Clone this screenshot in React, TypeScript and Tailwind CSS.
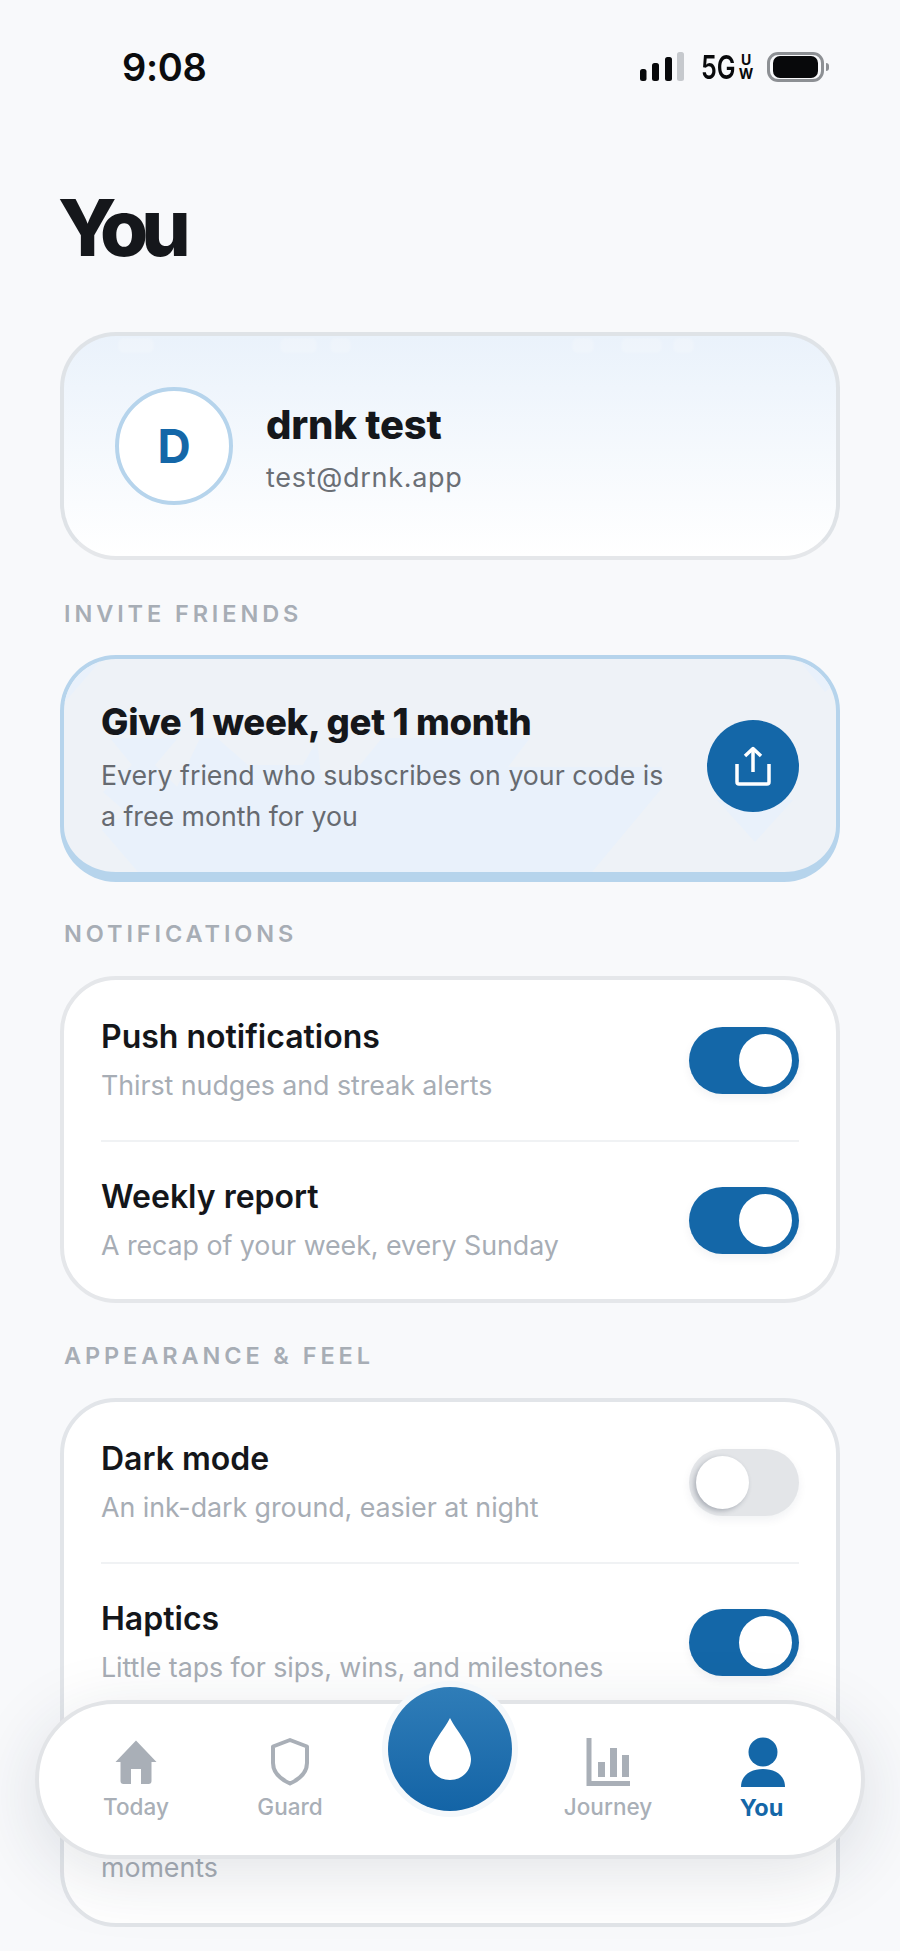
const sans = "[font-family:Inter,'Noto_Sans',sans-serif]";

const Toggle = ({ on }: { on: boolean }) => (
    <div
        className={`flex h-[67px] w-[110px] shrink-0 items-center rounded-full px-[7px] shadow-[0_4px_10px_rgba(20,40,70,0.06)] ${
            on ? 'justify-end bg-[#1467a8]' : 'justify-start bg-[#e3e5e8]'
        }`}
    >
        <div className={`h-[53px] w-[53px] rounded-full bg-white ${on ? '' : 'shadow-[-2px_2px_5px_rgba(40,50,70,0.3)]'}`} />
    </div>
);

const Row = ({ title, sub, on, height }: { title: string; sub: string; on: boolean; height: string }) => (
    <div className={`flex items-center justify-between ${height}`}>
        <div>
            <div className="text-[32px] leading-[42px] font-semibold text-[#14161a]">{title}</div>
            <div className="mt-[7px] text-[26.8px] leading-[40px] tracking-[-0.05px] text-[#a7adb5]">{sub}</div>
        </div>
        <Toggle on={on} />
    </div>
);

const Label = ({ children, className }: { children: string; className: string }) => (
    <div className={`ml-[4px] text-[23.5px] leading-[30px] font-semibold tracking-[3.9px] text-[#a7adb5] ${className}`}>{children}</div>
);

const Divider = () => <div className="h-[2px] bg-[#f0f2f4]" />;

const StatusBar = () => (
    <div className="flex h-[30px] items-center justify-between pr-[71px] pl-[122px]">
        <span className="text-[38px] leading-[30px] font-semibold tracking-[-0.3px] text-[#0b0c0e]">9:08</span>
        <div className="flex items-center">
            <svg width="44" height="30" viewBox="0 0 44 30" className="mr-[17px]">
                <rect x="0" y="17" width="6.5" height="12" rx="2.5" fill="#08090b" />
                <rect x="12" y="11" width="7" height="18" rx="2.5" fill="#08090b" />
                <rect x="25" y="5" width="7" height="24" rx="2.5" fill="#08090b" />
                <rect x="37" y="0" width="7" height="29" rx="2.5" fill="#c6c9cd" />
            </svg>
            <span className="w-[33px] origin-left scale-x-[0.76] text-[33px] leading-[30px] font-semibold text-[#08090b]">5G</span>
            <span className="ml-[6px] flex w-[12px] flex-col items-center text-[14px] leading-[14px] font-bold text-[#08090b]">
                <span>U</span>
                <span>W</span>
            </span>
            <div className="ml-[15px] flex h-[30px] w-[57px] items-center justify-center rounded-[11px] border-[3px] border-[#8d9094]">
                <div className="h-[22px] w-[45px] rounded-[7px] bg-[#08090b]" />
            </div>
            <div className="ml-[2px] h-[8px] w-[3px] rounded-r-full bg-[#8d9094]" />
        </div>
    </div>
);

const Nav = () => (
    <div className="absolute top-[1700px] left-[35px] h-[159px] w-[830px] rounded-full border-4 border-[#e2e4e7] bg-white shadow-[0_16px_70px_rgba(30,45,70,0.13)]">
        <div className="grid grid-cols-[154px_154px_166px_150px_160px] pt-[33px] pl-[20px] text-[22.5px] leading-[30px] font-medium text-[#a9afb7]">
            <div className="flex flex-col items-center">
                <svg width="42" height="50" viewBox="0 0 42 50">
                    <path
                        d="M21 3.5 L41.5 25 L36.5 25 L36.5 44 Q36.5 47 33.5 47 L26 47 L26 32 L16 32 L16 47 L8.5 47 Q5.5 47 5.5 44 L5.5 25 L0.5 25 Z"
                        fill="#a9afb7"
                    />
                </svg>
                <span className="mt-[5px]">Today</span>
            </div>
            <div className="flex flex-col items-center">
                <svg width="38" height="50" viewBox="0 0 38 50">
                    <path
                        d="M19 3 L36 9.5 L36 26 C36 35 29 42 19 46.5 C9 42 2 35 2 26 L2 9.5 Z"
                        fill="none"
                        stroke="#a9afb7"
                        strokeWidth="4"
                        strokeLinejoin="round"
                    />
                </svg>
                <span className="mt-[5px]">Guard</span>
            </div>
            <div className="relative">
                <div className="absolute top-[-56px] left-[15px] flex h-[136px] w-[136px] items-center justify-center rounded-full bg-[#f5f8fb]">
                    <div className="flex h-[124px] w-[124px] items-center justify-center rounded-full bg-gradient-to-b from-[#2f7db8] to-[#1364a6]">
                        <svg width="42" height="62" viewBox="0 0 42 62" className="mt-[-1px]">
                            <path d="M21 0 C27 12 42 28 42 41 C42 53 33 62 21 62 C9 62 0 53 0 41 C0 28 15 12 21 0 Z" fill="#fff" />
                        </svg>
                    </div>
                </div>
            </div>
            <div className="flex flex-col items-center">
                <svg width="44" height="50" viewBox="0 0 44 50">
                    <path d="M3 1 L3 46.5 L44 46.5" fill="none" stroke="#a9afb7" strokeWidth="5" />
                    <rect x="12" y="25" width="7" height="15" fill="#a9afb7" />
                    <rect x="24" y="11" width="7" height="29" fill="#a9afb7" />
                    <rect x="36" y="18" width="7" height="22" fill="#a9afb7" />
                </svg>
                <span className="mt-[5px]">Journey</span>
            </div>
            <div className="flex flex-col items-center text-[#1467a8]">
                <svg width="44" height="50" viewBox="0 0 44 50">
                    <circle cx="22" cy="15" r="14.5" fill="#1467a8" />
                    <path d="M0 50 C0 38 10 32 22 32 C34 32 44 38 44 50 Z" fill="#1467a8" />
                </svg>
                <span className="mt-[6px] mr-[3px] text-[23.5px] font-bold">You</span>
            </div>
        </div>
    </div>
);

const App = () => {
    return (
        <div className={`relative h-[1951px] w-[900px] overflow-hidden bg-[#f8f9fb] pt-[52px] ${sans}`}>
            <StatusBar />

            <div className="px-[60px]">
                <h1 className="mt-[107px] ml-[-2px] h-[78px] text-[78px] leading-[78px] font-extrabold tracking-[-7px] text-[#15171b]">You</h1>

                {/* Profile */}
                <div className="relative mt-[65px] flex h-[228px] items-center overflow-hidden rounded-[56px] border-4 border-[#dfe3e7] border-b-[#e5e7ea] bg-gradient-to-b from-[#eaf2fb] to-white pl-[51px]">
                    {/* faint ghost smudges along the top edge */}
                    <div className="absolute top-[2px] left-[54px] h-[15px] w-[36px] rounded-[6px] bg-white/20 blur-[1px]" />
                    <div className="absolute top-[2px] left-[216px] h-[15px] w-[37px] rounded-[6px] bg-white/20 blur-[1px]" />
                    <div className="absolute top-[2px] left-[266px] h-[15px] w-[21px] rounded-[6px] bg-white/20 blur-[1px]" />
                    <div className="absolute top-[2px] left-[508px] h-[15px] w-[22px] rounded-[6px] bg-white/20 blur-[1px]" />
                    <div className="absolute top-[2px] left-[557px] h-[15px] w-[41px] rounded-[6px] bg-white/20 blur-[1px]" />
                    <div className="absolute top-[2px] left-[609px] h-[15px] w-[21px] rounded-[6px] bg-white/20 blur-[1px]" />
                    <div className="relative flex h-[118px] w-[118px] items-center justify-center rounded-full border-4 border-[#b6d4ec] bg-white text-[46px] font-bold text-[#1467a8]">
                        D
                    </div>
                    <div className="relative mt-[5px] ml-[33px]">
                        <div className="text-[40px] leading-[46px] font-extrabold tracking-[-0.2px] text-[#15171b]">drnk test</div>
                        <div className="mt-[12px] text-[27px] leading-[36px] tracking-[0.7px] text-[#6b6f75]">test@drnk.app</div>
                    </div>
                </div>

                <Label className="mt-[39px]">INVITE FRIENDS</Label>

                {/* Invite */}
                <div className="relative mt-[26px] flex h-[227px] items-center justify-between overflow-hidden rounded-[56px] border-4 border-b-[10px] border-[#b6d4ec] bg-[#eef2f7] px-[37px]">
                    <svg width="772" height="213" viewBox="0 0 772 213" className="absolute top-0 left-0">
                        <path d="M0 44 L0 0 L38 0 Z M734 0 L772 0 L772 24 L761 33 Z M653 141 L729 141 L691 183 Z" fill="#e9f1fb" />
                        <path
                            d="M46 79 L114 79 L91 106 L113 128 L136 79 L153 79 L184 106 L239 106 L253 81 L258 126 L296 106 L318 79 L466 79 L444 108 L598 108 L598 129 L528 213 L74 213 L38 171 L63 154 L39 133 L68 106 Z"
                            fill="#e9f1fb"
                        />
                    </svg>
                    <div className="relative pt-[5px]">
                        <div className="text-[36.5px] leading-[44px] font-extrabold tracking-[-0.3px] text-[#15171b]">Give 1 week, get 1 month</div>
                        <div className="mt-[11px] text-[26.7px] leading-[41px] text-[#666a70]">
                            Every friend who subscribes on your code is
                            <br />a free month for you
                        </div>
                    </div>
                    <div className="relative flex h-[92px] w-[92px] shrink-0 items-center justify-center rounded-full bg-[#1467a8]">
                        <svg width="36" height="40" viewBox="0 0 36 40" fill="none" stroke="#fff" strokeWidth="3.5" strokeLinejoin="round">
                            <path d="M18 26 L18 3" />
                            <path d="M10 10 L18 2.5 L26 10" />
                            <path d="M2 18 L2 36 Q2 38 4 38 L32 38 Q34 38 34 36 L34 18" />
                        </svg>
                    </div>
                </div>

                <Label className="mt-[37px]">NOTIFICATIONS</Label>

                <div className="mt-[27px] h-[327px] rounded-[56px] border-4 border-[#e5e7ea] bg-white px-[37px]">
                    <Row title="Push notifications" sub="Thirst nudges and streak alerts" on height="h-[160px]" />
                    <Divider />
                    <Row title="Weekly report" sub="A recap of your week, every Sunday" on height="h-[157px]" />
                </div>

                <Label className="mt-[38px]">APPEARANCE &amp; FEEL</Label>

                <div className="mt-[27px] h-[529px] rounded-[56px] border-4 border-[#e2e5e9] bg-white px-[37px]">
                    <Row title="Dark mode" sub="An ink-dark ground, easier at night" on={false} height="h-[160px]" />
                    <Divider />
                    <Row title="Haptics" sub="Little taps for sips, wins, and milestones" on height="h-[157px]" />
                    <Divider />
                    {/* rest of this row sits behind the tab bar */}
                    <div className="pt-[124px] text-[26.8px] leading-[40px] tracking-[-0.05px] text-[#a7adb5]">moments</div>
                </div>
            </div>

            <Nav />
        </div>
    );
};

export default App;
